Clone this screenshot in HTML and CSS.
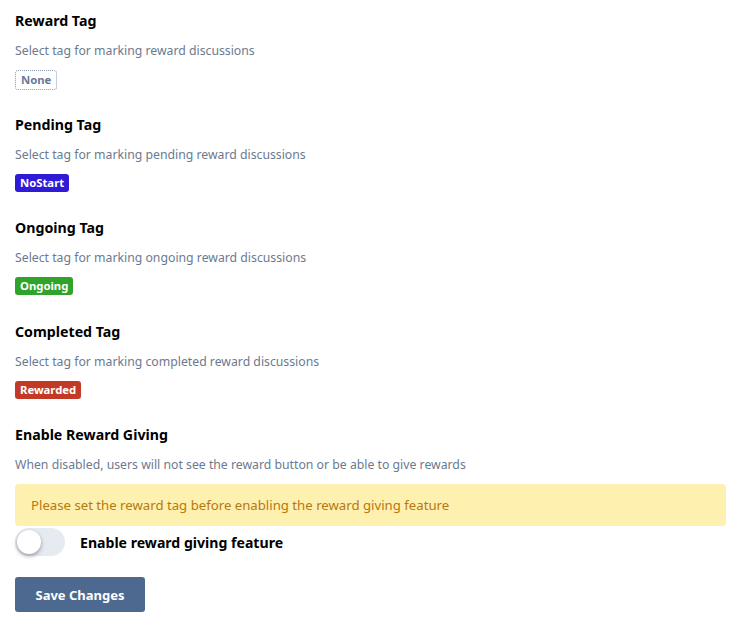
FILE: index.html
```html
<!DOCTYPE html>
<html>
<head>
<meta charset="utf-8">
<link rel="stylesheet" href="styles.css">
</head>
<body>
<div class="page">
  <section class="sec">
    <h3 class="title">Reward Tag</h3>
    <p class="desc">Select tag for marking reward discussions</p>
    <span class="tag tag-none">None</span>
  </section>
  <section class="sec">
    <h3 class="title">Pending Tag</h3>
    <p class="desc">Select tag for marking pending reward discussions</p>
    <span class="tag tag-blue">NoStart</span>
  </section>
  <section class="sec">
    <h3 class="title">Ongoing Tag</h3>
    <p class="desc">Select tag for marking ongoing reward discussions</p>
    <span class="tag tag-green">Ongoing</span>
  </section>
  <section class="sec">
    <h3 class="title">Completed Tag</h3>
    <p class="desc">Select tag for marking completed reward discussions</p>
    <span class="tag tag-red">Rewarded</span>
  </section>
  <section class="sec last">
    <h3 class="title">Enable Reward Giving</h3>
    <p class="desc">When disabled, users will not see the reward button or be able to give rewards</p>
    <div class="warn">Please set the reward tag before enabling the reward giving feature</div>
    <div class="switch-row">
      <span class="switch"><span class="knob"></span></span>
      <span class="switch-label">Enable reward giving feature</span>
    </div>
    <button class="btn">Save Changes</button>
  </section>
</div>
</body>
</html>
```

FILE: styles.css
```css
html, body {
  margin: 0;
  padding: 0;
  background: #fff;
}
body {
  font-family: "Noto Sans", "Open Sans", sans-serif;
}
.page {
  padding: 10px 8px 0 15px;
}
.sec {
  display: flex;
  flex-direction: column;
  align-items: flex-start;
  margin-bottom: 25.5px;
}
.title {
  margin: 0;
  padding-top: 1px;
  font-size: 14.2px;
  line-height: 20px;
  font-weight: 700;
  color: #000;
}
.desc {
  margin: 9px 0 10px;
  padding-top: 1px;
  font-size: 12.25px;
  line-height: 19px;
  color: #6b7a90;
}
.tag {
  box-sizing: border-box;
  height: 18px;
  line-height: 18px;
  padding: 0 5px;
  border-radius: 3px;
  font-size: 11.3px;
  font-weight: 700;
  color: #fff;
}
.tag-none {
  height: 20px;
  line-height: 18px;
  border: 1px dotted #8a9ab0;
  color: #667a96;
  margin-bottom: -2px;
}
.tag-blue { background: #2f1ad6; }
.tag-green { background: #2fa32a; }
.tag-red { background: #c23a25; }
.warn {
  box-sizing: border-box;
  align-self: stretch;
  height: 42px;
  padding: 0 16px;
  display: flex;
  align-items: center;
  background: #fef0ae;
  border-radius: 4px;
  color: #b7780e;
  font-size: 13.2px;
}
.switch-row {
  margin-top: 2px;
  display: flex;
  align-items: center;
  gap: 15px;
}
.switch {
  width: 50px;
  height: 28px;
  border-radius: 14px;
  background: #e6eaf1;
  display: flex;
  align-items: center;
}
.knob {
  width: 24px;
  height: 24px;
  margin-left: 2px;
  border-radius: 50%;
  background: #fff;
  box-shadow: 0 2px 4px rgba(0,0,0,0.35);
}
.switch-label {
  font-size: 14.1px;
  font-weight: 700;
  color: #000;
}
.btn {
  margin-top: 21px;
  width: 130px;
  height: 35px;
  border: none;
  border-radius: 3px;
  background: #4d6990;
  color: #fff;
  font-family: inherit;
  font-size: 13px;
  font-weight: 700;
}
```
